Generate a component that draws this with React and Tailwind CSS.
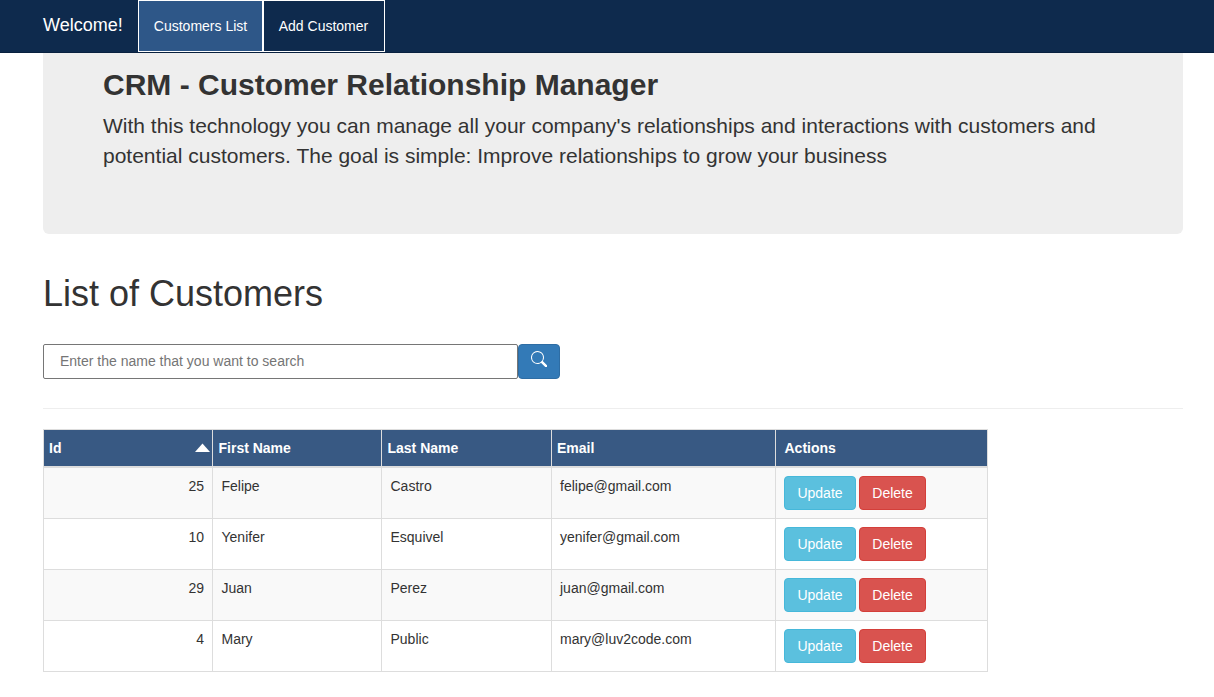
const customers = [
  { id: 25, first: 'Felipe', last: 'Castro', email: 'felipe@gmail.com' },
  { id: 10, first: 'Yenifer', last: 'Esquivel', email: 'yenifer@gmail.com' },
  { id: 29, first: 'Juan', last: 'Perez', email: 'juan@gmail.com' },
  { id: 4, first: 'Mary', last: 'Public', email: 'mary@luv2code.com' },
];

function Navbar() {
  return (
    <nav className="flex h-[53px] items-start border-b border-[#08203f] bg-[#0e2a4d] pl-[43px] text-white">
      <a href="#" className="mr-[15px] w-20 pt-[15px] text-lg leading-5 whitespace-nowrap">Welcome!</a>
      <a href="#" className="h-[52px] w-[125px] border border-white bg-[#2e5788] pt-[15px] text-center leading-5 whitespace-nowrap">
        Customers List
      </a>
      <a href="#" className="h-[52px] w-[122px] border border-white pt-[15px] pr-px text-center leading-5 whitespace-nowrap">
        Add Customer
      </a>
    </nav>
  );
}

function SearchIcon() {
  return (
    <svg width="16" height="16" viewBox="0 0 16 16" fill="currentColor">
      <path d="M11.742 10.344a6.5 6.5 0 1 0-1.397 1.398h-.001c.03.04.062.078.098.115l3.85 3.85a1 1 0 0 0 1.415-1.414l-3.85-3.85a1.007 1.007 0 0 0-.115-.1zM12 6.5a5.5 5.5 0 1 1-11 0 5.5 5.5 0 0 1 11 0z" />
      <path d="M11.3 11.3L15 15" stroke="currentColor" strokeWidth="2.4" strokeLinecap="round" />
    </svg>
  );
}

function HeaderCell({ children, className }) {
  return (
    <th className={`h-[39px] border-t border-b-2 border-l border-[#ddd] py-0 text-left align-top font-bold ${className}`}>
      <div className="flex h-9 items-center justify-between">{children}</div>
    </th>
  );
}

function Cell({ children, className = 'px-2' }) {
  return (
    <td className={`h-[51px] border-b border-l border-[#ddd] pt-2 pb-0 align-top ${className}`}>{children}</td>
  );
}

export default function App() {
  return (
    <div className="h-[697px] w-[1214px] overflow-hidden bg-white font-['Liberation_Sans',Arial,sans-serif] text-sm leading-5 text-[#333]">
      <Navbar />
      <main className="ml-[43px] w-[1140px]">
        <section className="h-[181px] rounded-b-md bg-[#eee] px-[60px] pt-[15px]">
          <h1 className="text-[30px] leading-[33px] font-bold">CRM - Customer Relationship Manager</h1>
          <p className="mt-[10px] text-[21px] leading-[30px]">
            With this technology you can manage all your company's relationships and interactions with customers and
            potential customers. The goal is simple: Improve relationships to grow your business
          </p>
        </section>

        <h2 className="mt-10 text-[36px] leading-10">List of Customers</h2>

        <form className="mt-[30px] flex h-[35px]">
          <input
            type="text"
            placeholder="Enter the name that you want to search"
            className="h-[35px] w-[475px] rounded-[2px] border border-[#767676] bg-white px-4 pb-[2px] leading-5 placeholder:text-[#757575]"
          />
          <button
            type="button"
            className="flex h-[35px] w-[42px] justify-center rounded border border-[#2e6da4] bg-[#337ab7] pt-[6px] text-white"
          >
            <SearchIcon />
          </button>
        </form>

        <hr className="mt-[29px] border-[#eee]" />

        <table className="mt-5 w-[945px] table-fixed border-separate border-spacing-0">
          <colgroup>
            <col className="w-[169px]" />
            <col className="w-[169px]" />
            <col className="w-[170px]" />
            <col className="w-[224px]" />
            <col className="w-[213px]" />
          </colgroup>
          <thead className="bg-[#385983] text-white">
            <tr>
              <HeaderCell className="pr-[2px] pl-[5px]">
                Id
                <svg className="mb-px" width="15" height="9" viewBox="0 0 15 9" fill="currentColor">
                  <path d="M0 9L7.5 0.5L15 9Z" />
                </svg>
              </HeaderCell>
              <HeaderCell className="pl-[5.5px]">First Name</HeaderCell>
              <HeaderCell className="pl-[5.5px]">Last Name</HeaderCell>
              <HeaderCell className="pl-[5px]">Email</HeaderCell>
              <HeaderCell className="border-r pl-[8.5px]">Actions</HeaderCell>
            </tr>
          </thead>
          <tbody>
            {customers.map((c) => (
              <tr key={c.id} className="odd:bg-[#f9f9f9]">
                <Cell className="px-2 text-right">{c.id}</Cell>
                <Cell className="pl-[8.5px]">{c.first}</Cell>
                <Cell className="pl-[8.5px]">{c.last}</Cell>
                <Cell>{c.email}</Cell>
                <Cell className="border-r px-2">
                  <div className="flex gap-[3px] text-white">
                    <button type="button" className="h-[34px] w-[72px] rounded border border-[#46b8da] bg-[#5bc0de]">
                      Update
                    </button>
                    <button type="button" className="h-[34px] w-[67px] rounded border border-[#d43f3a] bg-[#d9534f]">
                      Delete
                    </button>
                  </div>
                </Cell>
              </tr>
            ))}
          </tbody>
        </table>
      </main>
    </div>
  );
}
